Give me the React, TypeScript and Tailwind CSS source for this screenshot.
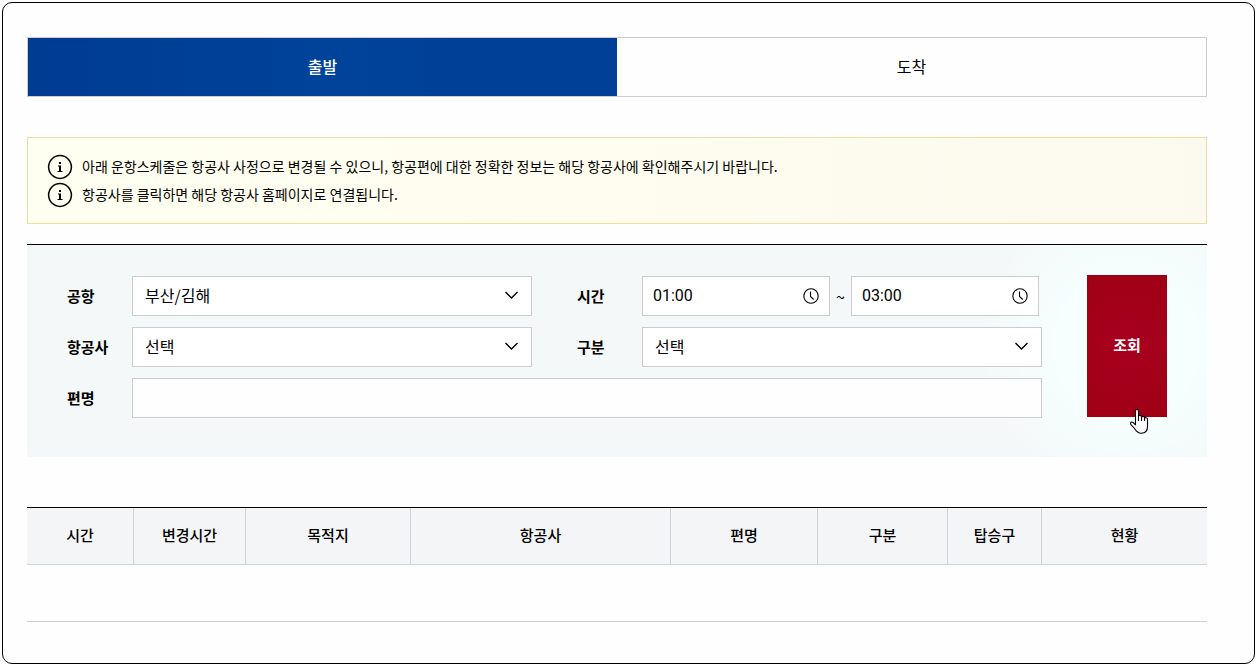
import { useState } from "react";

const columns = [
  { label: "시간", width: "w-[107px]" },
  { label: "변경시간", width: "w-[112px]" },
  { label: "목적지", width: "w-[165px]" },
  { label: "항공사", width: "w-[260px]" },
  { label: "편명", width: "w-[147px]" },
  { label: "구분", width: "w-[130px]" },
  { label: "탑승구", width: "w-[94px]" },
  { label: "현황", width: "w-[165px]" },
];

const notices = [
  "아래 운항스케줄은 항공사 사정으로 변경될 수 있으니, 항공편에 대한 정확한 정보는 해당 항공사에 확인해주시기 바랍니다.",
  "항공사를 클릭하면 해당 항공사 홈페이지로 연결됩니다.",
];

function InfoIcon() {
  return (
    <svg className="size-[26px] shrink-0" viewBox="0 0 26 26" fill="none" aria-hidden="true">
      <circle cx="13" cy="13" r="11.4" stroke="#000" strokeWidth="1.5" />
      <path d="M12 8h2v2h-2zM11 11.5h3V17h1.5v1h-5v-1H12v-4.5h-1z" fill="#000" />
    </svg>
  );
}

function Chevron() {
  return (
    <svg
      className="pointer-events-none absolute top-[15px] right-[13px] h-2 w-[14px]"
      viewBox="0 0 14 8"
      fill="none"
      aria-hidden="true"
    >
      <path d="M.5 1l6 6 6-6" stroke="#000" strokeWidth="1.4" />
    </svg>
  );
}

function ClockIcon() {
  return (
    <svg className="size-4" viewBox="0 0 16 16" fill="none" stroke="#000" aria-hidden="true">
      <circle cx="8" cy="8" r="7.2" strokeWidth="1.1" />
      <path d="M7.5 3.5v5l3.2 3" strokeWidth="1.1" />
    </svg>
  );
}

function HandPointer() {
  return (
    <svg
      className="pointer-events-none absolute top-[134px] left-[43px] h-[25px] w-[19px]"
      viewBox="0 0 19 25"
      aria-hidden="true"
    >
      <path
        d="M5.5 14.5V2c0-2 3-2 3 0v5.5c0-1.6 3-1.4 3 .3v.5c.3-1.4 3-1.2 3 .5v.6c.5-1.2 3-.9 3 .7v7.4c0 4-2.4 6.7-6.2 6.7-3.4 0-5-1.7-6.8-4.7L.8 15.3c-1-1.8 1-2.9 2.3-1.8l2.400 2.400z"
        fill="#fff"
        stroke="#000"
        strokeWidth="1.1"
        strokeLinejoin="round"
      />
      <path d="M8.5 7v5M11.5 8v4M14.5 9v3" stroke="#000" strokeWidth="1.1" />
    </svg>
  );
}

function SelectField({ id, options }: { id: string; options: string[] }) {
  return (
    <div className="relative">
      <select
        id={id}
        className="h-10 w-full appearance-none border border-[#cccccc] bg-white px-3 pb-[3px] text-base text-black"
      >
        {options.map((option) => (
          <option key={option}>{option}</option>
        ))}
      </select>
      <Chevron />
    </div>
  );
}

function TimeField({ id, label, initial }: { id: string; label: string; initial: string }) {
  const [value, setValue] = useState(initial);
  return (
    <div className="flex h-10 min-w-0 flex-1 items-center border border-[#cccccc] bg-white px-[10px]">
      <input
        id={id}
        type="text"
        aria-label={label}
        value={value}
        onChange={(event) => setValue(event.target.value)}
        className="w-full min-w-0 bg-transparent font-[Roboto,'Noto_Sans_CJK_KR',sans-serif] text-base outline-none"
      />
      <button type="button" aria-label={`${label} 선택`} className="shrink-0">
        <ClockIcon />
      </button>
    </div>
  );
}

export default function App() {
  const [tab, setTab] = useState("출발");
  const label = "text-[15px] font-bold";

  return (
    <div className="min-h-screen bg-white p-[2px] font-['Noto_Sans_CJK_KR','Noto_Sans',sans-serif] text-black">
      <main className="rounded-[10px] border border-black bg-[#fefefe] pt-[34px] pr-[47px] pb-[41px] pl-6">
        <div role="tablist" className="flex h-[60px] border border-[#cccccc]">
          {["출발", "도착"].map((name) => (
            <button
              key={name}
              type="button"
              role="tab"
              aria-selected={tab === name}
              onClick={() => setTab(name)}
              className={
                tab === name
                  ? "flex-1 bg-linear-to-r from-[#003b92] via-[#00439a] to-[#003f96] pb-[2px] text-base font-medium text-white"
                  : "flex-1 bg-[#fefefe] pb-[2px] text-base text-black"
              }
            >
              {name}
            </button>
          ))}
        </div>

        <ul className="mt-10 border border-[#ecdf9f] bg-linear-to-r from-[#fffff1] to-[#fcfaee] px-[19px] pt-[15px] pb-[14px]">
          {notices.map((notice) => (
            <li key={notice} className="flex h-7 items-center gap-[9px] text-sm">
              <InfoIcon />
              <span className="pb-[2px]">{notice}</span>
            </li>
          ))}
        </ul>

        <form
          onSubmit={(event) => event.preventDefault()}
          className="mt-5 flex items-start gap-[45px] border-t border-black bg-[#f5f8f8] bg-[radial-gradient(circle_at_right_80px_top_100px,#f5fffe_0,#f5fffe_70px,transparent_150px)] px-10 pt-[30px] pb-[39px]"
        >
          <div className="grid flex-1 grid-cols-[65px_1fr_110px_1fr] items-center gap-y-[11px] pt-px">
            <label htmlFor="airport" className={label}>
              공항
            </label>
            <SelectField id="airport" options={["부산/김해", "서울/김포", "제주"]} />
            <label htmlFor="time-from" className="pl-[45px] text-[15px] font-bold">
              시간
            </label>
            <div className="flex items-center pr-[3px]">
              <TimeField id="time-from" label="시작 시간" initial="01:00" />
              <span className="w-[21px] text-center text-base">~</span>
              <TimeField id="time-to" label="종료 시간" initial="03:00" />
            </div>
            <label htmlFor="airline" className={label}>
              항공사
            </label>
            <SelectField id="airline" options={["선택", "대한항공", "아시아나항공"]} />
            <label htmlFor="kind" className="pl-[45px] text-[15px] font-bold">
              구분
            </label>
            <SelectField id="kind" options={["선택", "여객", "화물"]} />
            <label htmlFor="flight" className={label}>
              편명
            </label>
            <input
              id="flight"
              type="text"
              className="col-span-3 h-10 border border-[#cccccc] bg-[#fefefe] px-3 text-base"
            />
          </div>
          <div className="relative flex">
            <button
              type="submit"
              className="h-[142px] w-20 cursor-pointer bg-[radial-gradient(circle,#a8001f,#9f0014)] pb-[2px] text-[15px] font-bold text-white"
            >
              조회
            </button>
            <HandPointer />
          </div>
        </form>

        <table className="mt-[50px] w-full table-fixed border-separate border-spacing-0 border-t border-black">
          <thead>
            <tr className="h-[57px]">
              {columns.map((column) => (
                <th
                  key={column.label}
                  scope="col"
                  className={`${column.width} border-r border-b border-[#ced4d6] bg-[#f3f5f6] pb-[2px] text-[15px] font-medium last:border-r-0`}
                >
                  {column.label}
                </th>
              ))}
            </tr>
          </thead>
          <tbody>
            <tr className="h-[57px]">
              <td colSpan={8} className="border-b border-[#cfcfcf]" />
            </tr>
          </tbody>
        </table>
      </main>
    </div>
  );
}
